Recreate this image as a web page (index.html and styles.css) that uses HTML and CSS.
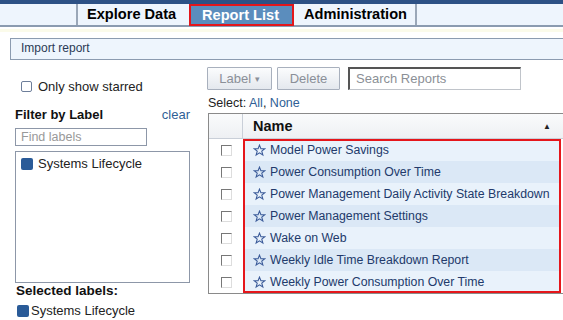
FILE: index.html
```html
<!DOCTYPE html>
<html>
<head>
<meta charset="utf-8">
<link rel="stylesheet" href="styles.css">
</head>
<body>
<div class="topstripe"></div>
<div class="tabbar">
  <div class="tabs">
    <div class="tab t1">Explore Data</div>
    <div class="tab active">Report List</div>
    <div class="tab t3">Administration</div>
  </div>
</div>
<div class="sepline"></div>
<div class="importbar">Import report</div>
<div class="main">
  <div class="left">
    <label class="starred"><span class="cb"></span>Only show starred</label>
    <div class="filterhead"><span class="bold">Filter by Label</span><span class="link">clear</span></div>
    <div class="findlabels">Find labels</div>
    <div class="labelbox">
      <div class="labelitem"><span class="sq"></span>Systems Lifecycle</div>
    </div>
    <div class="selhead">Selected labels:</div>
    <div class="selitem"><span class="sq sm"></span>Systems Lifecycle</div>
  </div>
  <div class="right">
    <div class="toolbar">
      <div class="btn lbl">Label <span class="caret">&#9662;</span></div>
      <div class="btn del">Delete</div>
      <div class="search">Search Reports</div>
    </div>
    <div class="select">Select: <span class="link">All</span>, <span class="link">None</span></div>
    <div class="table">
      <div class="thead">
        <div class="ccol"></div>
        <div class="ncol">Name</div>
        <div class="sort">&#9650;</div>
      </div>
      <div class="tbody">
        <div class="cbcol">
          <div class="cbcell"><span class="rcb"></span></div>
          <div class="cbcell"><span class="rcb"></span></div>
          <div class="cbcell"><span class="rcb"></span></div>
          <div class="cbcell"><span class="rcb"></span></div>
          <div class="cbcell"><span class="rcb"></span></div>
          <div class="cbcell"><span class="rcb"></span></div>
          <div class="cbcell"><span class="rcb"></span></div>
        </div>
        <div class="rows">
          <div class="row a"><svg class="star" viewBox="0 0 12 12"><path d="M6 1 L7.3 4.3 L10.8 4.4 L8.1 6.6 L9.1 10.1 L6 8.1 L2.9 10.1 L3.9 6.6 L1.2 4.4 L4.7 4.3 Z"/></svg>Model Power Savings</div>
          <div class="row b"><svg class="star" viewBox="0 0 12 12"><path d="M6 1 L7.3 4.3 L10.8 4.4 L8.1 6.6 L9.1 10.1 L6 8.1 L2.9 10.1 L3.9 6.6 L1.2 4.4 L4.7 4.3 Z"/></svg>Power Consumption Over Time</div>
          <div class="row a"><svg class="star" viewBox="0 0 12 12"><path d="M6 1 L7.3 4.3 L10.8 4.4 L8.1 6.6 L9.1 10.1 L6 8.1 L2.9 10.1 L3.9 6.6 L1.2 4.4 L4.7 4.3 Z"/></svg>Power Management Daily Activity State Breakdown</div>
          <div class="row b"><svg class="star" viewBox="0 0 12 12"><path d="M6 1 L7.3 4.3 L10.8 4.4 L8.1 6.6 L9.1 10.1 L6 8.1 L2.9 10.1 L3.9 6.6 L1.2 4.4 L4.7 4.3 Z"/></svg>Power Management Settings</div>
          <div class="row a"><svg class="star" viewBox="0 0 12 12"><path d="M6 1 L7.3 4.3 L10.8 4.4 L8.1 6.6 L9.1 10.1 L6 8.1 L2.9 10.1 L3.9 6.6 L1.2 4.4 L4.7 4.3 Z"/></svg>Wake on Web</div>
          <div class="row b"><svg class="star" viewBox="0 0 12 12"><path d="M6 1 L7.3 4.3 L10.8 4.4 L8.1 6.6 L9.1 10.1 L6 8.1 L2.9 10.1 L3.9 6.6 L1.2 4.4 L4.7 4.3 Z"/></svg>Weekly Idle Time Breakdown Report</div>
          <div class="row a"><svg class="star" viewBox="0 0 12 12"><path d="M6 1 L7.3 4.3 L10.8 4.4 L8.1 6.6 L9.1 10.1 L6 8.1 L2.9 10.1 L3.9 6.6 L1.2 4.4 L4.7 4.3 Z"/></svg>Weekly Power Consumption Over Time</div>
        </div>
      </div>
    </div>
  </div>
</div>
</body>
</html>
```
FILE: styles.css
```css
* { box-sizing: border-box; }
html, body { margin: 0; padding: 0; background: #fff; }
body {
  width: 563px; height: 320px; overflow: hidden;
  font-family: "Liberation Sans", Arial, sans-serif;
  font-size: 13px; color: #222;
}
.topstripe { height: 4px; background: #2d5185; }
.tabbar {
  height: 23px; background: #eef5fd;
  border-bottom: 2px solid #8b9bb0;
  padding-left: 76px;
}
.tabs { display: flex; height: 100%; }
.tab {
  font-weight: bold; font-size: 14.6px; color: #000;
  height: 21px; line-height: 21px; white-space: nowrap;
  background: #eef5fd;
}
.t1 { width: 113px; border-left: 2px solid #9aa7b8; padding-left: 9px; }
.tab.active {
  background: #5b8dbd; color: #fff;
  border: 2px solid #e3161b; width: 105px; padding-left: 11px;
  line-height: 18px; height: 22px;
}
.t3 { width: 123px; border-right: 2px solid #9aa7b8; padding-left: 10px; }
.sepline { height: 3px; margin-top: 2px; background: #fbfbea; }
.importbar {
  margin: 6px 0 0 10px; height: 22px;
  background: #eef5fd; border: 1px solid #8b9bb0; border-right: none;
  font-size: 12px; color: #2b3a55; line-height: 19px; padding-left: 10px;
}
.main { display: flex; }
.left { width: 207px; padding-left: 15px; padding-top: 18px; }
.starred { display: flex; align-items: center; gap: 6px; padding-left: 6px; font-size: 13px; color: #222; height: 16px; }
.cb { width: 11px; height: 11px; border: 1px solid #6d7e9a; border-radius: 2px; background: #fff; }
.filterhead { display: flex; justify-content: space-between; width: 175px; margin-top: 12px; height: 16px; align-items: center; }
.bold { font-weight: bold; font-size: 13px; color: #111; }
.link { color: #2f5f96; }
.filterhead .link { font-size: 13px; }
.findlabels {
  margin-top: 6px; width: 132px; height: 18px;
  border: 1px solid #8d97a8; color: #999; font-size: 12.5px; line-height: 16px; padding-left: 5px;
}
.labelbox { margin-top: 5px; width: 175px; height: 132px; border: 1px solid #8d97a8; padding: 4px 5px; }
.labelitem { display: flex; align-items: center; gap: 5px; font-size: 13px; height: 15px; }
.sq { width: 12px; height: 12px; background: #2a5b98; border-radius: 2px; display: inline-block; }
.selhead { font-weight: bold; font-size: 13.5px; color: #111; padding-left: 1px; height: 16px; line-height: 16px; }
.selitem { display: flex; align-items: center; gap: 2px; margin-top: 4px; padding-left: 2px; font-size: 13px; height: 15px; }
.right { flex: 1; padding-top: 7px; }
.toolbar { display: flex; align-items: center; height: 23px; }
.btn {
  height: 23px; border: 1px solid #a8b0bd; border-radius: 1px;
  background: linear-gradient(#fbfcfd, #e4e8ee);
  color: #8a8f98; font-size: 13px; line-height: 21px; text-align: center;
}
.lbl { width: 65px; }
.caret { font-size: 9px; vertical-align: 1px; }
.del { width: 63px; margin-left: 5px; }
.search {
  margin-left: 8px; width: 173px; height: 23px;
  border: 1px solid #c0c4ca; border-top: 2px solid #555; border-left: 2px solid #555;
  color: #8b8f96; font-size: 13px; line-height: 19px; padding-left: 6px;
}
.select { height: 20px; line-height: 20px; margin-top: 3px; font-size: 12.5px; padding-left: 1px; }
.table { margin-left: 1px; border-left: 1px solid #8a8a8a; border-top: 1px solid #8a8a8a; border-bottom: 1px solid #8a8a8a; }
.thead { display: flex; height: 25px; background: linear-gradient(#fafbfc, #eef0f3); border-bottom: 1px solid #c9cfd8; }
.ccol { width: 34px; border-right: 1px solid #c9cfd8; }
.ncol { flex: 1; font-weight: bold; font-size: 14.5px; color: #111; line-height: 25px; padding-left: 10px; }
.sort { width: 20px; font-size: 8px; line-height: 25px; color: #222; }
.tbody { display: flex; height: 154px; }
.cbcol { width: 34px; }
.cbcell { height: 22px; display: flex; align-items: center; justify-content: center; }
.rcb { width: 11px; height: 11px; border: 1px solid #777; border-right-color: #ddd; border-bottom-color: #ddd; background: #fff; }
.rows { flex: 1; margin-right: 2px; outline: 2px solid #e5161b; outline-offset: -2px; }
.row { height: 22px; display: flex; align-items: center; padding-left: 10px; gap: 4px; color: #223a6b; font-size: 12.3px; }
.row.a { background: #e9f2fb; }
.row.b { background: #dbe8f6; }
.star { width: 13px; height: 13px; fill: none; stroke: #3c5c9a; stroke-width: 1; }
```
